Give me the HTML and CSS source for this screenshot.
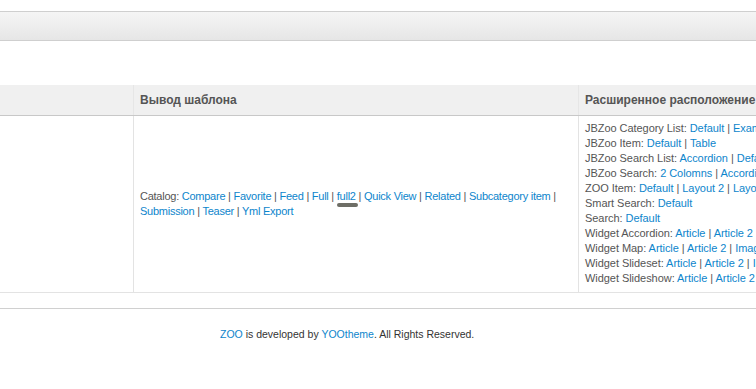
FILE: index.html
```html
<!DOCTYPE html>
<html>
<head>
<meta charset="utf-8">
<link rel="stylesheet" href="styles.css">
</head>
<body>
<div class="topbar"></div>
<div class="gap"></div>
<table class="grid">
  <thead>
    <tr>
      <th class="c1"></th>
      <th class="c2">Вывод шаблона</th>
      <th class="c3">Расширенное расположение</th>
    </tr>
  </thead>
  <tbody>
    <tr>
      <td class="c1"></td>
      <td class="c2">Catalog: <a>Compare</a> | <a>Favorite</a> | <a>Feed</a> | <a>Full</a> | <a class="mark">full2</a> | <a>Quick View</a> | <a>Related</a> | <a>Subcategory item</a> | <a>Submission</a> | <a>Teaser</a> | <a>Yml Export</a></td>
      <td class="c3">
        <div>JBZoo Category List: <a>Default</a> | <a>Example</a> | <a>Table</a></div>
        <div>JBZoo Item: <a>Default</a> | <a>Table</a></div>
        <div>JBZoo Search List: <a>Accordion</a> | <a>Default</a> | <a>Table</a></div>
        <div>JBZoo Search: <a>2 Colomns</a> | <a>Accordion</a> | <a>Default</a></div>
        <div>ZOO Item: <a>Default</a> | <a>Layout 2</a> | <a>Layout 3</a></div>
        <div>Smart Search: <a>Default</a></div>
        <div>Search: <a>Default</a></div>
        <div>Widget Accordion: <a>Article</a> | <a>Article 2</a> | <a>Image</a></div>
        <div>Widget Map: <a>Article</a> | <a>Article 2</a> | <a>Image</a></div>
        <div>Widget Slideset: <a>Article</a> | <a>Article 2</a> | <a>Image</a></div>
        <div>Widget Slideshow: <a>Article</a> | <a>Article 2</a> | <a>Image</a></div>
      </td>
    </tr>
  </tbody>
</table>
<div class="foot-line"></div>
<div class="footer"><a>ZOO</a> is developed by <a>YOOtheme</a>. All Rights Reserved.</div>
</body>
</html>
```

FILE: styles.css
```css
html, body {
  margin: 0;
  padding: 0;
  background: #fff;
  overflow: hidden;
  width: 756px;
  height: 389px;
}
body {
  font-family: "Liberation Sans", Arial, sans-serif;
  font-size: 11px;
  color: #555;
}
a {
  color: #0d85cc;
  text-decoration: none;
}
.topbar {
  margin-top: 11px;
  height: 28px;
  border-top: 1px solid #cfcfcf;
  border-bottom: 1px solid #cfcfcf;
  background: linear-gradient(#f5f5f5, #e6e6e6);
}
.gap {
  height: 44px;
}
.grid {
  border-collapse: collapse;
  table-layout: fixed;
  width: 980px;
}
.grid th {
  background: #f0f0f0;
  height: 30px;
  padding: 0 6px;
  text-align: left;
  font-size: 12px;
  font-weight: bold;
  color: #555;
  border-bottom: 1px solid #c8c8c8;
  white-space: nowrap;
}
.grid td {
  padding: 5px 6px 6px;
  line-height: 15px;
  vertical-align: middle;
  border-bottom: 1px solid #e3e3e3;
}
.grid .c1 { width: 121px; }
.grid .c2 { width: 432px; border-left: 1px solid #e3e3e3; }
.grid td.c2 { letter-spacing: -0.25px; }
.grid .c3 { width: 400px; border-left: 1px solid #e3e3e3; white-space: nowrap; }
.grid td.c3 { letter-spacing: -0.05px; }
.grid th.c2, .grid th.c3 { border-left: 1px solid #e6e6e6; }
.mark {
  position: relative;
}
.mark::after {
  content: "";
  position: absolute;
  left: 0;
  top: 13px;
  width: 21px;
  height: 4px;
  border-radius: 3px;
  background: #6e6e66;
}
.foot-line {
  margin-top: 15px;
  border-top: 1px solid #d0d0d0;
}
.footer {
  padding: 19px 0 0 220px;
  font-size: 10.5px;
  color: #333;
}
```
